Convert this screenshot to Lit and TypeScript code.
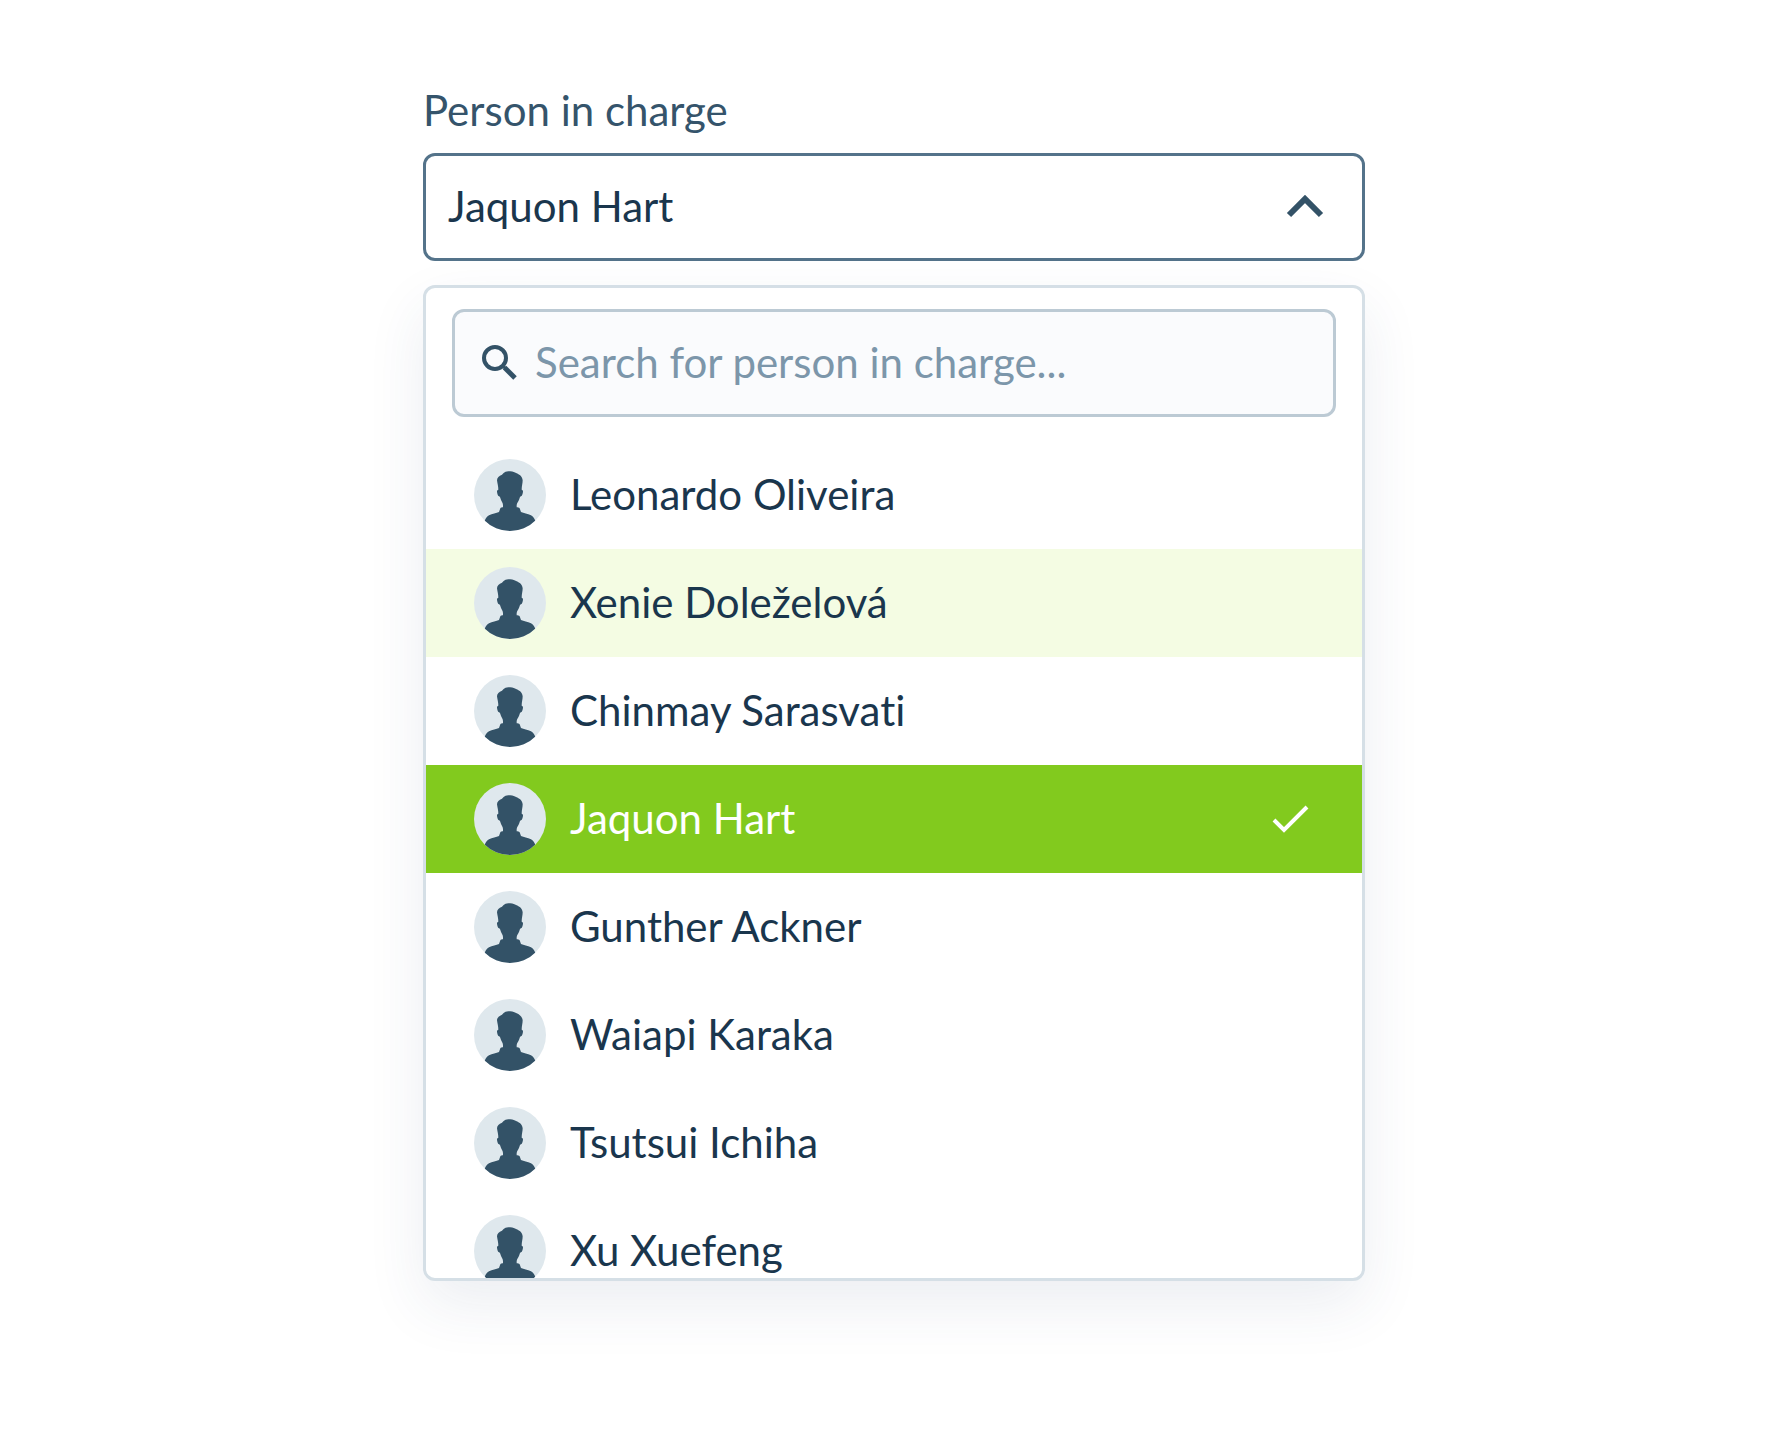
import { LitElement, html, css, svg } from "lit";
import { customElement, property, state } from "lit/decorators.js";
import { classMap } from "lit/directives/class-map.js";

const PEOPLE = [
  "Leonardo Oliveira",
  "Xenie Doleželová",
  "Chinmay Sarasvati",
  "Jaquon Hart",
  "Gunther Ackner",
  "Waiapi Karaka",
  "Tsutsui Ichiha",
  "Xu Xuefeng",
];

const silhouette = svg`
  <path d="M103 37 C97 37 92 39 88 43 L84 47 C75 51 69 56 69 64 C70 74 73 81 73 92
    C70 92 69 95 69 98 C70 104 71 110 75 112 C77 113 78 114 79 117
    C81 127 87 130 87 138 L87 145 C84 145 80 146 79 148 L75 159
    C67 163 55 164 45 169 C37 174 34 180 32 187 A108 108 0 0 0 184 187
    C182 180 179 174 171 169 C161 164 149 163 141 159 L137 148
    C135 146 131 145 128 145 L128 138 C129 130 135 127 137 117
    C138 114 139 113 141 112 C145 110 146 104 147 98
    C147 95 146 92 143 92 C143 81 146 74 146 64
    C145 53 137 47 128 43 C119 38 110 37 103 37 Z" />
`;

@customElement("person-avatar")
export class PersonAvatar extends LitElement {
  static styles = css`
    :host {
      display: block;
      flex: none;
      width: 72px;
      height: 72px;
      border-radius: 50%;
      overflow: hidden;
      background: #dfe8ed;
      color: #335267;
    }
    .figure {
      display: block;
      width: 100%;
      height: 100%;
      fill: currentColor;
    }
  `;

  render() {
    return html`<svg class="figure" viewBox="0 0 216 216" aria-hidden="true">${silhouette}</svg>`;
  }
}

@customElement("person-select")
export class PersonSelect extends LitElement {
  @property() label = "";
  @property({ attribute: false }) people: string[] = [];
  @property() value = "";
  @state() private active = "Xenie Doleželová";
  @state() private query = "";
  @state() private open = true;

  static styles = css`
    :host {
      display: block;
      font-family: Lato, "Liberation Sans", sans-serif;
      font-size: 42px;
      line-height: 54px;
      font-variant-ligatures: none;
      color: #1a364d;
    }
    * {
      box-sizing: border-box;
    }
    .label {
      display: block;
      margin-bottom: 16px;
      color: #35546b;
    }
    .trigger,
    .search,
    .option {
      display: flex;
      align-items: center;
      width: 100%;
      height: 108px;
      font: inherit;
      font-variant-ligatures: none;
    }
    .trigger {
      justify-content: space-between;
      padding: 0 33px 0 22px;
      border: 3px solid #54738a;
      border-radius: 12px;
      background: #fff;
      color: inherit;
      text-align: left;
      cursor: pointer;
    }
    .icon {
      flex: none;
      display: block;
      width: 48px;
      height: 48px;
      fill: none;
      stroke: #335267;
    }
    .panel {
      margin-top: 24px;
      padding-top: 21px;
      border: 3px solid #d5dfe6;
      border-radius: 12px;
      background: #fff;
      box-shadow: 0 24px 60px rgba(40, 65, 110, 0.09);
      overflow: hidden;
    }
    .search-row {
      padding: 0 26px 24px;
    }
    .search {
      gap: 11px;
      padding: 0 21px;
      border: 3px solid #bccad4;
      border-radius: 12px;
      background: #fafbfd;
    }
    .name,
    .search-input {
      flex: 1;
      min-width: 0;
      padding: 0 0 2px;
    }
    .search-input {
      border: 0;
      outline: 0;
      background: none;
      color: inherit;
      font: inherit;
    }
    .search-input::placeholder {
      color: #7c96aa;
      opacity: 1;
    }
    .list {
      max-height: 837px;
      overflow-y: auto;
      scrollbar-width: none;
    }
    .option {
      gap: 24px;
      padding: 0 46px 0 48px;
      border: 0;
      background: none;
      color: inherit;
      text-align: left;
      cursor: pointer;
    }
    .option.active {
      background: #f4fce3;
    }
    .option.selected {
      background: #82ca1e;
      color: #fff;
    }
    .option .icon {
      stroke: #fff;
    }
  `;

  private choose(name: string) {
    this.value = name;
  }

  private renderOption(name: string) {
    const selected = name === this.value;
    return html`
      <button
        type="button"
        role="option"
        aria-selected=${selected ? "true" : "false"}
        class=${classMap({ option: true, selected, active: name === this.active })}
        @mouseenter=${() => (this.active = name)}
        @click=${() => this.choose(name)}
      >
        <person-avatar></person-avatar>
        <span class="name">${name}</span>
        ${selected
          ? html`<svg class="icon" viewBox="0 0 48 48" stroke-width="4" aria-hidden="true">
              <path d="M6 25l10 10 23-23" />
            </svg>`
          : null}
      </button>
    `;
  }

  private renderPanel() {
    const query = this.query.toLowerCase();
    const matches = this.people.filter((name) => name.toLowerCase().includes(query));
    return html`
      <div class="panel">
        <div class="search-row">
          <div class="search">
            <svg class="icon" viewBox="0 0 48 48" aria-hidden="true">
              <circle cx="19" cy="19" r="11" stroke-width="4" />
              <path d="M26 26l4 4" stroke-width="3" />
              <path d="M28.5 28.5L39 39" stroke-width="5" />
            </svg>
            <input
              class="search-input"
              type="text"
              aria-label="Search for person in charge"
              placeholder="Search for person in charge..."
              .value=${this.query}
              @input=${(e: Event) => (this.query = (e.target as HTMLInputElement).value)}
            />
          </div>
        </div>
        <div class="list" id="people" role="listbox" aria-label=${this.label}>
          ${matches.map((name) => this.renderOption(name))}
        </div>
      </div>
    `;
  }

  render() {
    return html`
      <label class="label" for="trigger">${this.label}</label>
      <button
        type="button"
        id="trigger"
        class="trigger"
        aria-haspopup="listbox"
        aria-expanded=${this.open ? "true" : "false"}
        @click=${() => (this.open = !this.open)}
      >
        <span class="name">${this.value}</span>
        <svg class="icon" viewBox="0 0 48 48" stroke-width="6" aria-hidden="true">
          <path d=${this.open ? "M8 32L24 16L40 32" : "M8 16L24 32L40 16"} />
        </svg>
      </button>
      ${this.open ? this.renderPanel() : null}
    `;
  }
}

@customElement("app-root")
export class AppRoot extends LitElement {
  static styles = css`
    :host {
      display: block;
      box-sizing: border-box;
      min-height: 100vh;
      padding: 83px 24px;
      background: #fff;
    }
    .field {
      max-width: 942px;
      margin: 0 auto;
    }
  `;

  render() {
    return html`
      <person-select
        class="field"
        label="Person in charge"
        value="Jaquon Hart"
        .people=${PEOPLE}
      ></person-select>
    `;
  }
}
